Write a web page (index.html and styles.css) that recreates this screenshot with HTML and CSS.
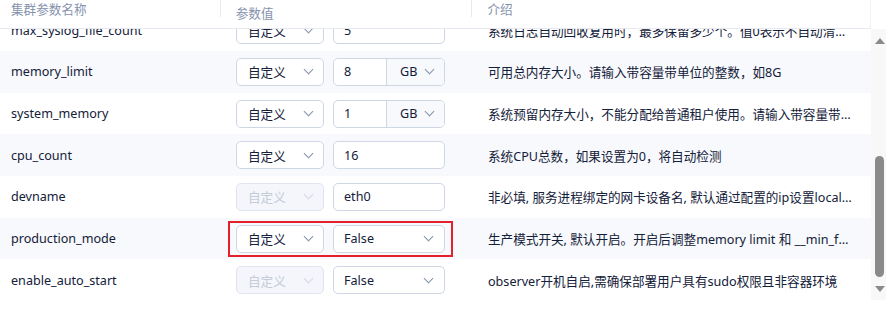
FILE: index.html
```html
<!DOCTYPE html>
<html>
<head>
  <title>集群参数</title>
  <link rel="stylesheet" href="styles.css">
</head>
<body>
  <div class="param-panel">
    <div class="param-table">
      <div class="table-head">
        <div class="col col-name">集群参数名称</div>
        <div class="col col-value">参数值</div>
        <div class="col col-desc">介绍</div>
      </div>

      <div class="table-body">
        <div class="row first">
          <div class="col col-name">max_syslog_file_count</div>
          <div class="col col-value">
            <div class="select"><span>自定义</span><i class="chevron"></i></div>
            <div class="input"><span>5</span></div>
          </div>
          <div class="col col-desc">系统日志自动回收复用时，最多保留多少个。值0表示不自动清理。</div>
        </div>

        <div class="row">
          <div class="col col-name">memory_limit</div>
          <div class="col col-value">
            <div class="select"><span>自定义</span><i class="chevron"></i></div>
            <div class="input unit-input"><span class="num">8</span><span class="unit">GB<i class="chevron"></i></span></div>
          </div>
          <div class="col col-desc">可用总内存大小。请输入带容量带单位的整数，如8G</div>
        </div>

        <div class="row">
          <div class="col col-name">system_memory</div>
          <div class="col col-value">
            <div class="select"><span>自定义</span><i class="chevron"></i></div>
            <div class="input unit-input"><span class="num">1</span><span class="unit">GB<i class="chevron"></i></span></div>
          </div>
          <div class="col col-desc">系统预留内存大小，不能分配给普通租户使用。请输入带容量带单位的整数，如30G</div>
        </div>

        <div class="row">
          <div class="col col-name">cpu_count</div>
          <div class="col col-value">
            <div class="select"><span>自定义</span><i class="chevron"></i></div>
            <div class="input"><span>16</span></div>
          </div>
          <div class="col col-desc">系统CPU总数，如果设置为0，将自动检测</div>
        </div>

        <div class="row">
          <div class="col col-name">devname</div>
          <div class="col col-value">
            <div class="select disabled"><span>自定义</span><i class="chevron"></i></div>
            <div class="input"><span>eth0</span></div>
          </div>
          <div class="col col-desc">非必填, 服务进程绑定的网卡设备名, 默认通过配置的ip设置local_ip</div>
        </div>

        <div class="row">
          <div class="col col-name">production_mode</div>
          <div class="col col-value">
            <div class="highlight">
              <div class="select"><span>自定义</span><i class="chevron"></i></div>
              <div class="input select-input"><span>False</span><i class="chevron"></i></div>
            </div>
          </div>
          <div class="col col-desc">生产模式开关, 默认开启。开启后调整memory limit 和 __min_full_resource_pool_memory</div>
        </div>

        <div class="row last">
          <div class="col col-name">enable_auto_start</div>
          <div class="col col-value">
            <div class="select disabled"><span>自定义</span><i class="chevron"></i></div>
            <div class="input select-input"><span>False</span><i class="chevron"></i></div>
          </div>
          <div class="col col-desc">observer开机自启,需确保部署用户具有sudo权限且非容器环境</div>
        </div>
      </div>
    </div>

    <div class="scrollbar">
      <div class="arrow up"></div>
      <div class="track">
        <div class="thumb"></div>
      </div>
      <div class="arrow down"></div>
    </div>
  </div>
</body>
</html>
```

FILE: styles.css
```css
body {
  margin: 0;
  background: #fff;
  font-family: "Noto Sans", "Noto Sans CJK SC", sans-serif;
  font-size: 12.6px;
  color: #132039;
}
.param-panel {
  display: flex;
  width: 886px;
  height: 314px;
  overflow: hidden;
}
.param-table {
  width: 871px;
  display: flex;
  flex-direction: column;
}
.table-head {
  display: flex;
  height: 28px;
  border-bottom: 1px solid #e6e9f0;
  color: #8592ad;
  position: relative;
  z-index: 1;
  background: #fff;
  border-right: 1px solid #f0f1f4;
}
.table-head .col {
  line-height: 20px;
  position: relative;
}
.table-head .col-value::before,
.table-head .col-desc::before {
  content: '';
  position: absolute;
  left: 0;
  top: 0;
  width: 1px;
  height: 17px;
  background: #e6e9f0;
}
.col-name {
  width: 220px;
  padding-left: 11px;
  box-sizing: border-box;
}
.col-value {
  width: 252px;
  padding-left: 16px;
  box-sizing: border-box;
  display: flex;
  align-items: center;
  gap: 9px;
}
.col-desc {
  width: 399px;
  padding: 0 16px;
  box-sizing: border-box;
  white-space: nowrap;
  overflow: hidden;
  text-overflow: ellipsis;
}
.table-body {
  height: 272px;
  overflow: hidden;
}
.row {
  display: flex;
  align-items: center;
  height: 41.7px;
}
.row:nth-child(even) {
  background: #f8f9fc;
}
.row.first {
  margin-top: -19.7px;
}
.row.last {
  border-bottom: 1px solid #e2e7f1;
}

/* controls */
.select, .input {
  height: 28px;
  box-sizing: border-box;
  border: 1px solid #cfd6e4;
  border-radius: 5px;
  background: #fff;
  display: flex;
  align-items: center;
}
.select {
  width: 88px;
  padding: 0 11px;
  justify-content: space-between;
}
.select.disabled {
  background: #f4f6fb;
  border-color: #dfe4ee;
  color: #c5cbd8;
}
.select.disabled .chevron {
  border-color: #d3d8e3;
}
.input {
  width: 112px;
  padding-left: 10px;
}
.select-input {
  justify-content: space-between;
  padding-right: 12px;
}
.unit-input {
  padding-left: 0;
  overflow: hidden;
}
.unit-input .num {
  width: 53px;
  padding-left: 10px;
  box-sizing: border-box;
  border-right: 1px solid #cfd6e4;
  height: 100%;
  display: flex;
  align-items: center;
}
.unit-input .unit {
  flex: 1;
  height: 100%;
  background: #f8f9fc;
  display: flex;
  align-items: center;
  justify-content: space-between;
  padding: 0 11px 0 13px;
}
.chevron {
  width: 6px;
  height: 6px;
  border-right: 1px solid #8592ad;
  border-bottom: 1px solid #8592ad;
  transform: rotate(45deg);
  margin-top: -4px;
}
.highlight {
  display: flex;
  gap: 9px;
  margin: -4px -8px;
  padding: 2px 6px;
  border: 2px solid #e3202b;
}

/* scrollbar */
.scrollbar {
  width: 15px;
  margin-top: 29px;
  height: 271px;
  background: #f8f8f8;
  display: flex;
  flex-direction: column;
  align-items: center;
}
.track {
  flex: 1;
  width: 100%;
  display: flex;
  flex-direction: column;
  align-items: center;
}
.thumb {
  width: 9px;
  height: 121px;
  margin-top: 112px;
  margin-left: 2px;
  background: #8a8a8a;
  border-radius: 5px;
}
.arrow {
  width: 0;
  height: 0;
  margin-left: 2px;
  border-left: 5px solid transparent;
  border-right: 5px solid transparent;
}
.arrow.up {
  margin-top: 9px;
  border-bottom: 6px solid #8a8a8a;
}
.arrow.down {
  margin-bottom: 8px;
  border-top: 6px solid #8a8a8a;
}
```
